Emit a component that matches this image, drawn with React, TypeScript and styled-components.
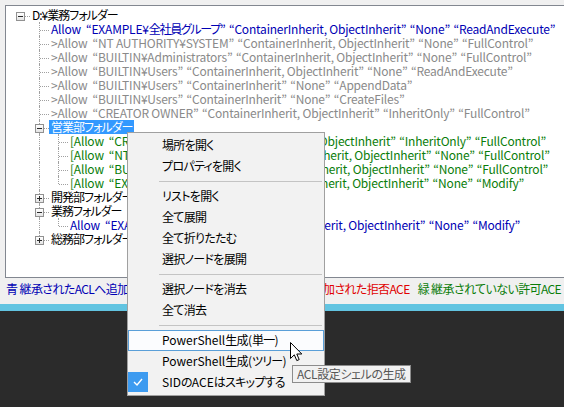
import React from "react";
import styled, { createGlobalStyle, css } from "styled-components";

type Tone = "black" | "blue" | "grey" | "green" | "red";

const toneColor: Record<Tone, string> = {
  black: "#000000",
  blue: "#0000b4",
  grey: "#8a8a8a",
  green: "#0a7d0a",
  red: "#e00000",
};

const GlobalStyle = createGlobalStyle`
  html, body {
    margin: 0;
    padding: 0;
    background: #2b2b2b;
  }
  body {
    font-family: "Noto Sans CJK JP", "Noto Sans", sans-serif;
    font-size: 12px;
    font-feature-settings: "palt";
  }
`;

const Screen = styled.div`
  position: relative;
  width: 564px;
  height: 407px;
  overflow: hidden;
  display: flex;
  flex-direction: column;
  background: #2b2b2b;
`;

const Form = styled.div`
  height: 304px;
  box-sizing: border-box;
  padding: 5px 0 0 5px;
  background: #f0f0f0;
  display: flex;
  flex-direction: column;
`;

const TreePanel = styled.div`
  height: 273px;
  box-sizing: border-box;
  border: 1px solid #828790;
  border-right: none;
  background: #ffffff;
  padding: 2px 0 0 5px;
  overflow: hidden;
`;

const Row = styled.div`
  display: flex;
  height: 14px;
  white-space: nowrap;
`;

const dotted = "1px dotted #a0a0a0";

const Guide = styled.span<{ $line: boolean }>`
  position: relative;
  flex: none;
  width: 19px;
  ${(p) =>
    p.$line &&
    css`
      &::before {
        content: "";
        position: absolute;
        left: 9px;
        top: 0;
        bottom: 0;
        border-left: ${dotted};
      }
    `}
`;

const Elbow = styled.span<{ $up: boolean; $down: boolean }>`
  position: relative;
  flex: none;
  width: 19px;
  &::before {
    content: "";
    position: absolute;
    left: 9px;
    top: ${(p) => (p.$up ? "0" : "8px")};
    bottom: ${(p) => (p.$down ? "0" : "6px")};
    border-left: ${(p) => (p.$up || p.$down ? dotted : "none")};
  }
  &::after {
    content: "";
    position: absolute;
    left: 10px;
    right: 0;
    top: 8px;
    border-top: ${dotted};
  }
`;

const Expander = styled.span<{ $open: boolean }>`
  position: absolute;
  z-index: 1;
  left: 5px;
  top: 4px;
  width: 9px;
  height: 9px;
  box-sizing: border-box;
  border: 1px solid #919191;
  background: linear-gradient(#ffffff, #e4e4e4);
  &::before {
    content: "";
    position: absolute;
    left: 1px;
    top: 3px;
    width: 5px;
    height: 1px;
    background: #2a2a2a;
  }
  ${(p) =>
    !p.$open &&
    css`
      &::after {
        content: "";
        position: absolute;
        left: 3px;
        top: 1px;
        width: 1px;
        height: 5px;
        background: #2a2a2a;
      }
    `}
`;

const Label = styled.span<{ $tone: Tone; $selected?: boolean; $folder?: boolean }>`
  padding: 0 2px;
  line-height: 14px;
  height: 14px;
  color: ${(p) => (p.$selected ? "#ffffff" : toneColor[p.$tone])};
  background: ${(p) => (p.$selected ? "#3399ff" : "transparent")};
  letter-spacing: ${(p) => (p.$folder ? "-1px" : "-0.2px")};
`;

const Quote = styled.span<{ $open?: boolean }>`
  display: inline-block;
  width: ${(p) => (p.$open ? "8px" : "4px")};
  text-align: ${(p) => (p.$open ? "right" : "left")};
`;

const Cjk = styled.span<{ $track: number }>`
  letter-spacing: ${(p) => p.$track}px;
`;

const LegendBar = styled.div`
  display: flex;
  gap: 8px;
  padding: 4px 0 0 1px;
  line-height: 14px;
  white-space: nowrap;
  letter-spacing: -0.6px;
`;

const LegendItem = styled.span<{ $tone: Tone }>`
  color: ${(p) => toneColor[p.$tone]};
`;

const AccentBar = styled.div`
  height: 7px;
  background: #62c4e1;
`;

const Console = styled.div`
  flex: 1;
  background: #2b2b2b;
`;

const Menu = styled.div`
  position: absolute;
  left: 127px;
  top: 132px;
  width: 198px;
  box-sizing: border-box;
  padding: 2px 0;
  background: #f2f2f2;
  border: 1px solid #a0a0a0;
  color: #000000;
`;

const MenuItem = styled.div<{ $hot?: boolean }>`
  position: relative;
  height: 21px;
  line-height: 20px;
  padding-left: 34px;
  box-sizing: border-box;
  white-space: nowrap;
  ${(p) =>
    p.$hot &&
    css`
      background: #fbfcfe;
      border: 1px solid #5a9fd8;
      line-height: 18px;
      padding-left: 33px;
    `}
`;

const Separator = styled.div`
  height: 9px;
  display: flex;
  align-items: center;
  padding: 0 2px 0 31px;
  &::after {
    content: "";
    flex: 1;
    height: 1px;
    background: #c4c4c4;
  }
`;

const CheckBox = styled.span`
  position: absolute;
  left: 0;
  top: 0;
  width: 20px;
  height: 20px;
  background: #3d9bf0;
  display: flex;
  align-items: center;
  justify-content: center;
`;

const Tooltip = styled.div`
  position: absolute;
  left: 292px;
  top: 365px;
  height: 18px;
  box-sizing: border-box;
  padding: 0 4px;
  line-height: 16px;
  background: #f1f1f1;
  border: 1px solid #8c8c8c;
  color: #575757;
  white-space: nowrap;
  letter-spacing: -0.4px;
`;

const Pointer = styled.svg`
  position: absolute;
  left: 290px;
  top: 342px;
`;

type Ace = { prefix: string; parts: string[] };

type TreeRow = {
  guides: boolean[];
  up: boolean;
  down: boolean;
  tone: Tone;
  folder?: string;
  ace?: Ace;
  expander?: "open" | "closed";
  selected?: boolean;
};

const CIOI = "ContainerInherit, ObjectInherit";

const ace = (prefix: string, ...parts: string[]): Ace => ({ prefix, parts });

const rows: TreeRow[] = [
  { guides: [], up: false, down: false, tone: "black", folder: "D:¥業務フォルダー", expander: "open" },
  { guides: [false], up: true, down: true, tone: "blue", ace: ace("", "EXAMPLE¥全社員グループ", CIOI, "None", "ReadAndExecute") },
  { guides: [false], up: true, down: true, tone: "grey", ace: ace(">", "NT AUTHORITY¥SYSTEM", CIOI, "None", "FullControl") },
  { guides: [false], up: true, down: true, tone: "grey", ace: ace(">", "BUILTIN¥Administrators", CIOI, "None", "FullControl") },
  { guides: [false], up: true, down: true, tone: "grey", ace: ace(">", "BUILTIN¥Users", CIOI, "None", "ReadAndExecute") },
  { guides: [false], up: true, down: true, tone: "grey", ace: ace(">", "BUILTIN¥Users", "ContainerInherit", "None", "AppendData") },
  { guides: [false], up: true, down: true, tone: "grey", ace: ace(">", "BUILTIN¥Users", "ContainerInherit", "None", "CreateFiles") },
  { guides: [false], up: true, down: true, tone: "grey", ace: ace(">", "CREATOR OWNER", CIOI, "InheritOnly", "FullControl") },
  { guides: [false], up: true, down: true, tone: "black", folder: "営業部フォルダー", expander: "open", selected: true },
  { guides: [false, true], up: true, down: true, tone: "green", ace: ace("[", "CREATOR OWNER", CIOI, "InheritOnly", "FullControl") },
  { guides: [false, true], up: true, down: true, tone: "green", ace: ace("[", "NT AUTHORITY¥SYSTEM", CIOI, "None", "FullControl") },
  { guides: [false, true], up: true, down: true, tone: "green", ace: ace("[", "BUILTIN¥Administrators", CIOI, "None", "FullControl") },
  { guides: [false, true], up: true, down: false, tone: "green", ace: ace("[", "EXAMPLE¥全社員グループ", CIOI, "None", "Modify") },
  { guides: [false], up: true, down: true, tone: "black", folder: "開発部フォルダー", expander: "closed" },
  { guides: [false], up: true, down: true, tone: "black", folder: "業務フォルダー", expander: "open" },
  { guides: [false, true], up: true, down: false, tone: "blue", ace: ace("", "EXAMPLE¥全社員グループ", CIOI, "None", "Modify") },
  { guides: [false], up: true, down: false, tone: "black", folder: "総務部フォルダー", expander: "closed" },
];

type MenuEntry = { label: string; hot?: boolean; checked?: boolean } | "sep";

const menu: MenuEntry[] = [
  { label: "場所を開く" },
  { label: "プロパティを開く" },
  "sep",
  { label: "リストを開く" },
  { label: "全て展開" },
  { label: "全て折りたたむ" },
  { label: "選択ノードを展開" },
  "sep",
  { label: "選択ノードを消去" },
  { label: "全て消去" },
  "sep",
  { label: "PowerShell生成(単一)", hot: true },
  { label: "PowerShell生成(ツリー)" },
  { label: "SIDのACEはスキップする", checked: true },
];

// Japanese runs are set a little tighter than the latin text around them
const cjkRun = /([\u3000-\u30ff\u4e00-\u9fff\uff00-\uffef]+)/;

function Jp({ text, track }: { text: string; track: number }) {
  return (
    <>
      {text.split(cjkRun).map((s, i) =>
        i % 2 ? (
          <Cjk key={i} $track={track}>
            {s}
          </Cjk>
        ) : (
          s
        )
      )}
    </>
  );
}

function AceText({ value }: { value: Ace }) {
  return (
    <>
      {value.prefix}Allow{" "}
      {value.parts.map((p, i) => (
        <React.Fragment key={i}>
          {i > 0 && " "}
          <Quote $open>“</Quote>
          <Jp text={p} track={-1.3} />
          <Quote>”</Quote>
        </React.Fragment>
      ))}
    </>
  );
}

export default function App() {
  return (
    <>
      <GlobalStyle />
      <Screen>
        <Form>
          <TreePanel>
            {rows.map((r, i) => (
              <Row key={i}>
                {r.guides.map((g, j) => (
                  <Guide key={j} $line={g} />
                ))}
                <Elbow $up={r.up} $down={r.down}>
                  {r.expander && <Expander $open={r.expander === "open"} />}
                </Elbow>
                <Label $tone={r.tone} $selected={r.selected} $folder={!!r.folder}>
                  {r.folder}
                  {r.ace && <AceText value={r.ace} />}
                </Label>
              </Row>
            ))}
          </TreePanel>
          <LegendBar>
            <LegendItem $tone="blue">青 継承されたACLへ追加された許可ACE</LegendItem>
            <LegendItem $tone="red">赤 継承されたACLへ追加された拒否ACE</LegendItem>
            <LegendItem $tone="green">緑 継承されていない許可ACE</LegendItem>
          </LegendBar>
        </Form>
        <AccentBar />
        <Console />

        <Menu>
          {menu.map((m, i) =>
            m === "sep" ? (
              <Separator key={i} />
            ) : (
              <MenuItem key={i} $hot={m.hot}>
                {m.checked && (
                  <CheckBox>
                    <svg width="10" height="8" viewBox="0 0 10 8">
                      <path d="M1 4 L4 7 L9 1" fill="none" stroke="#ffffff" strokeWidth="1.4" />
                    </svg>
                  </CheckBox>
                )}
                <Jp text={m.label} track={-0.7} />
              </MenuItem>
            )
          )}
        </Menu>

        <Tooltip>ACL設定シェルの生成</Tooltip>

        <Pointer width="13" height="21" viewBox="0 0 13 21">
          <path
            d="M0.5 0.5 L0.5 16.5 L4.3 12.8 L6.8 18.6 L9.2 17.6 L6.8 12 L11.8 12 Z"
            fill="#ffffff"
            stroke="#000000"
            strokeWidth="1"
            strokeLinejoin="miter"
          />
        </Pointer>
      </Screen>
    </>
  );
}
